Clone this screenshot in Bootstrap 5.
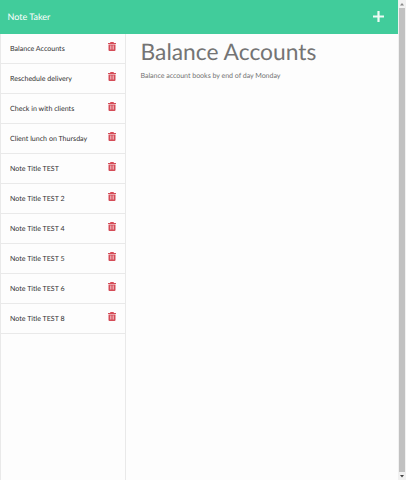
<!DOCTYPE html>
<html lang="en">
<head>
<meta charset="utf-8">
<meta name="viewport" content="width=device-width, initial-scale=1">
<title>Note Taker</title>
<link href="https://cdn.jsdelivr.net/npm/bootstrap@5.3.0/dist/css/bootstrap.min.css" rel="stylesheet">
<style>
body{font-family:Lato,sans-serif;font-size:7.1px;background:#fdfdfd;color:#333;text-rendering:geometricPrecision}
.topbar{height:33.5px;background:#41cc9b;padding:0 14px 0 7.5px;flex:none}
.topbar .navbar-brand{font-size:9px;line-height:14px;color:#fff}
.plus{width:11px;height:11px;fill:#effbf6}
.notes{width:125.5px;border-left:1px solid #e9e9e9;border-right:1px solid #e9e9e9}
.notes .list-group-item{height:30px;padding:2px 9px 0;background:transparent;border-color:#e9e9e9;color:#333}
.notes .list-group-item:last-child{height:29.4px}
.notes .list-group{--bs-border-color:#e9e9e9}
.trash{width:8px;height:9px;fill:#d54c58;margin-top:-5px}
.note-view{padding:3px 15px;color:#747474}
.note-view h1{font-size:22.8px;line-height:29px;font-weight:400;margin:0 0 4.5px}
.note-view p{font-size:7.1px;line-height:11px;letter-spacing:-.05px}
.scroller{width:8px;background:#f1f1f1}
.thumb{width:6px;background:#c1c1c1}
.arrow{width:8px;height:8px;fill:#888;flex:none}
</style>
<script src="https://cdn.jsdelivr.net/npm/bootstrap@5.3.0/dist/js/bootstrap.bundle.min.js"></script>
</head>
<body class="vh-100 d-flex overflow-hidden">
<svg class="d-none"><symbol id="bin" viewBox="0 0 16 18"><path fill-rule="evenodd" d="M5 0h6l1 2h4v2H0V2h4zM1 5h14v11q0 2-2 2H3q-2 0-2-2zM4.300 7v8h1V7zm3.200 0v8h1V7zm3.200 0v8h1V7z"/></symbol></svg>
<div class="flex-grow-1 d-flex flex-column">
<nav class="topbar navbar d-flex justify-content-between align-items-center">
<a class="navbar-brand p-0 m-0" href="#">Note Taker</a>
<svg class="plus" viewBox="0 0 11 11"><path d="M4.4 0h2.2v4.4H11v2.2H6.6V11H4.4V6.6H0V4.4h4.4z"/></svg>
</nav>
<main class="d-flex flex-grow-1">
<aside class="notes flex-shrink-0">
<ul class="list-group list-group-flush border-bottom" id="notes">
<li class="list-group-item d-flex align-items-center justify-content-between"><span>Balance Accounts</span><svg class="trash"><use href="#bin"/></svg></li>
<li class="list-group-item d-flex align-items-center justify-content-between"><span>Reschedule delivery</span><svg class="trash"><use href="#bin"/></svg></li>
<li class="list-group-item d-flex align-items-center justify-content-between"><span>Check in with clients</span><svg class="trash"><use href="#bin"/></svg></li>
<li class="list-group-item d-flex align-items-center justify-content-between"><span>Client lunch on Thursday</span><svg class="trash"><use href="#bin"/></svg></li>
<li class="list-group-item d-flex align-items-center justify-content-between"><span>Note Title TEST</span><svg class="trash"><use href="#bin"/></svg></li>
<li class="list-group-item d-flex align-items-center justify-content-between"><span>Note Title TEST 2</span><svg class="trash"><use href="#bin"/></svg></li>
<li class="list-group-item d-flex align-items-center justify-content-between"><span>Note Title TEST 4</span><svg class="trash"><use href="#bin"/></svg></li>
<li class="list-group-item d-flex align-items-center justify-content-between"><span>Note Title TEST 5</span><svg class="trash"><use href="#bin"/></svg></li>
<li class="list-group-item d-flex align-items-center justify-content-between"><span>Note Title TEST 6</span><svg class="trash"><use href="#bin"/></svg></li>
<li class="list-group-item d-flex align-items-center justify-content-between"><span>Note Title TEST 8</span><svg class="trash"><use href="#bin"/></svg></li>
</ul>
</aside>
<section class="note-view flex-grow-1">
<h1>Balance Accounts</h1>
<p class="m-0">Balance account books by end of day Monday</p>
</section>
</main>
</div>
<div class="scroller d-flex flex-column align-items-center flex-shrink-0">
<svg class="arrow" viewBox="0 0 8 8"><path d="M2 5.5 4 3l2 2.500z"/></svg>
<div class="thumb flex-grow-1"></div>
<svg class="arrow" viewBox="0 0 8 8"><path fill="#444" d="M2 3h4L4 5.500z"/></svg>
</div>
</body>
</html>
